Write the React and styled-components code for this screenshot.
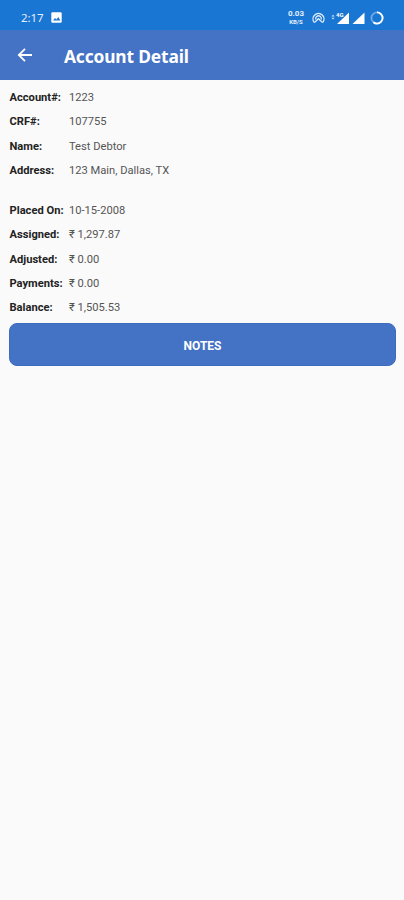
import React from 'react';
import styled, { createGlobalStyle } from 'styled-components';

const GlobalStyle = createGlobalStyle`
  * {
    box-sizing: border-box;
  }
  body {
    margin: 0;
    background-color: #fafafa;
    font-family: Roboto, 'Noto Sans', sans-serif;
  }
`;

const Screen = styled.div`
  display: flex;
  flex-direction: column;
  width: 100%;
  min-height: 100vh;
  background-color: #fafafa;
`;

const StatusBar = styled.div`
  display: flex;
  align-items: center;
  height: 30px;
  padding: 5px 20px 0 21px;
  background-color: #1976d2;
  color: #e4effb;
`;

const Clock = styled.span`
  width: 30px;
  font-family: 'Noto Sans', sans-serif;
  font-size: 11.5px;
  line-height: 14px;
  letter-spacing: -0.1px;
`;

const StatusIcons = styled.div`
  display: flex;
  align-items: center;
  margin-left: auto;
`;

const NetSpeed = styled.div`
  display: flex;
  flex-direction: column;
  align-items: center;
  width: 18px;
  margin-right: 7px;
  font-size: 8px;
  font-weight: 700;
  line-height: 8px;
`;

const SpeedUnit = styled.span`
  font-size: 6px;
  line-height: 7px;
`;

const Header = styled.header`
  display: flex;
  align-items: center;
  height: 50px;
  padding-left: 17px;
  background-color: #4472c4;
  color: #fff;
`;

const BackButton = styled.button`
  display: flex;
  width: 47px;
  padding: 0;
  border: 0;
  background: none;
  color: inherit;
`;

const Title = styled.h1`
  margin: 0;
  padding-top: 1px;
  font-family: 'Noto Sans', sans-serif;
  font-size: 17.4px;
  font-weight: 700;
  line-height: 24px;
  letter-spacing: -0.16px;
`;

const Details = styled.main`
  display: flex;
  flex-direction: column;
  padding: 5.9px 8px 0 9px;
`;

const Group = styled.div`
  display: flex;
  flex-direction: column;
  margin-bottom: ${({ $gap }) => $gap || '0'};
`;

const Row = styled.div`
  display: flex;
  align-items: center;
  height: 24.35px;
  padding-left: 0.5px;
  font-size: 11.15px;
  line-height: 14px;
  white-space: nowrap;
`;

const Label = styled.span`
  width: 59.5px;
  color: #222;
  font-weight: 700;
`;

const Value = styled.span`
  color: #555;
`;

const NotesButton = styled.button`
  height: 43px;
  margin-top: 2.3px;
  padding: 3px 0 0;
  border: 1px solid #3d6bbf;
  border-radius: 8px;
  background-color: #4472c4;
  color: #fff;
  font-family: inherit;
  font-size: 12px;
  font-weight: 700;
`;

const account = [
  ['Account#:', '1223'],
  ['CRF#:', '107755'],
  ['Name:', 'Test Debtor'],
  ['Address:', '123 Main, Dallas, TX'],
];

const amounts = [
  ['Placed On:', '10-15-2008'],
  ['Assigned:', '₹ 1,297.87'],
  ['Adjusted:', '₹ 0.00'],
  ['Payments:', '₹ 0.00'],
  ['Balance:', '₹ 1,505.53'],
];

const PictureIcon = () => (
  <svg width="11" height="11" viewBox="0 0 11 11">
    <rect x="0.3" y="0.3" width="10.4" height="10.4" rx="1.2" fill="#fff" />
    <path d="M2 8.5l2-2.5 1.4 1.5 1.9-2.4 2 3.4z" fill="#1976d2" />
  </svg>
);

const HotspotIcon = () => (
  <svg width="13" height="12" viewBox="0 0 13 12" fill="none" stroke="currentColor" strokeWidth="1.3">
    <path d="M2.2 10.4a5.5 5.5 0 1 1 8.6 0" />
    <path d="M3.9 7.6a2.8 2.8 0 1 1 5.2 0" />
    <path d="M2.4 10.6l4.1-3.9 4.1 3.9" />
  </svg>
);

const SignalIcons = () => (
  <svg width="45" height="14" viewBox="0 0 45 14" fill="#fff">
    <path d="M6.4 5.6L8 3.8l1.6 1.8zM6.4 6.8h3.2L8 8.6z" opacity="0.8" />
    <path d="M12 13L24 1.5V13z" />
    <path d="M10 0h8.5v7H10z" fill="#1976d2" />
    <text x="11" y="6" fontSize="6" fontWeight="700" fontFamily="Roboto, sans-serif">
      4G
    </text>
    <path d="M27.5 13L39.5 1.5V13z" />
  </svg>
);

const BatteryIcon = () => (
  <svg width="14" height="14" viewBox="0 0 14 14" fill="none" strokeWidth="1.8">
    <circle cx="7" cy="7" r="5.6" stroke="#6fa9e6" />
    <path d="M7 1.4a5.6 5.6 0 0 1 0 11.2 5.6 5.6 0 0 1-3.6-1.3" stroke="#fff" />
  </svg>
);

const BackIcon = () => (
  <svg width="16" height="16" viewBox="0 0 16 16" fill="none" stroke="currentColor" strokeWidth="1.8">
    <path d="M15 8H2M8 1.8L1.8 8 8 14.2" />
  </svg>
);

const DetailRows = ({ rows, gap }) => (
  <Group $gap={gap}>
    {rows.map(([label, value]) => (
      <Row key={label}>
        <Label>{label}</Label>
        <Value>{value}</Value>
      </Row>
    ))}
  </Group>
);

const App = () => (
  <>
    <GlobalStyle />
    <Screen>
      <StatusBar>
        <Clock>2:17</Clock>
        <PictureIcon />
        <StatusIcons>
          <NetSpeed>
            0.03
            <SpeedUnit>KB/S</SpeedUnit>
          </NetSpeed>
          <HotspotIcon />
          <SignalIcons />
          <BatteryIcon />
        </StatusIcons>
      </StatusBar>
      <Header>
        <BackButton aria-label="Back">
          <BackIcon />
        </BackButton>
        <Title>Account Detail</Title>
      </Header>
      <Details>
        <DetailRows rows={account} gap="15.5px" />
        <DetailRows rows={amounts} />
        <NotesButton>NOTES</NotesButton>
      </Details>
    </Screen>
  </>
);

export default App;
